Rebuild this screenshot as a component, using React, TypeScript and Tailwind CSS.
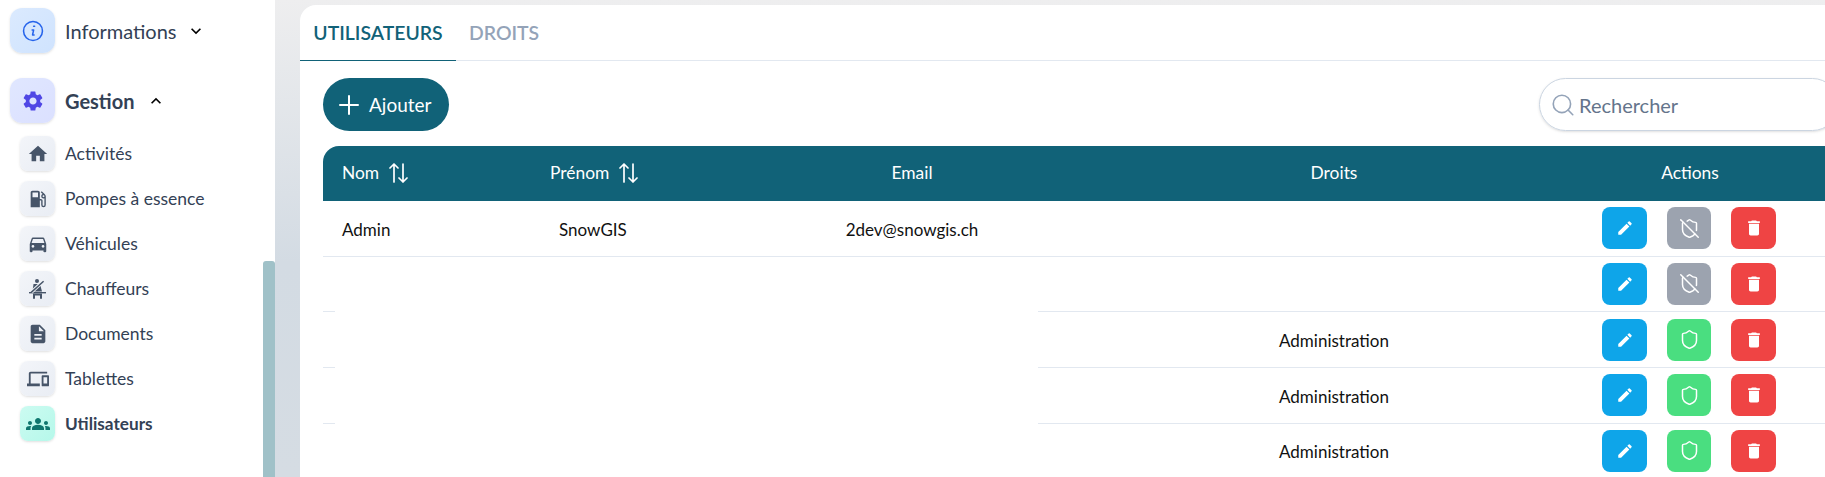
import React from "react";
import { MdHome, MdLocalGasStation, MdDirectionsCar, MdDescription, MdPhonelink, MdGroups, MdEdit, MdDelete, MdKeyboardArrowDown, MdKeyboardArrowUp, MdSettings } from "react-icons/md";
import { Shield, ShieldOff, Search } from "lucide-react";

const font = { fontFamily: "Lato, sans-serif" };

function Seatbelt() {
  return (
    <svg viewBox="0 0 17 20" className="w-[17px] h-[20px]" fill="#475569">
      <circle cx="8" cy="2" r="2" />
      <path d="M4.5 5h6.5l2 7.5H3.5z" />
      <path d="M0 13h17v1.4H0z" />
      <path d="M4 14.4h2v5.4H4zM11 14.4h2v5.4h-2zM4 14.4h9v2H4z" />
      <path d="M2.6 13L14 2.6" stroke="#f1f4f8" strokeWidth="3.4" fill="none" />
      <path d="M2.2 13.4L14.6 2.2" stroke="#475569" strokeWidth="1.5" fill="none" />
    </svg>
  );
}

const subItems = [
  { label: "Activités", icon: <MdHome size={22} color="#475569" /> },
  { label: "Pompes à essence", icon: <MdLocalGasStation size={22} color="#475569" /> },
  { label: "Véhicules", icon: <MdDirectionsCar size={22} color="#475569" /> },
  { label: "Chauffeurs", icon: <Seatbelt /> },
  { label: "Documents", icon: <MdDescription size={22} color="#475569" /> },
  { label: "Tablettes", icon: <MdPhonelink size={22} color="#475569" /> },
];

function Sidebar() {
  return (
    <aside className="relative w-[275px] h-full shrink-0 bg-white pt-2 pl-[10px] text-[#334155]">
      <div className="flex items-center h-[45px]">
        <div className="w-[45px] h-[45px] rounded-xl bg-gradient-to-br from-[#dbeafe] to-[#cfe3fe] shadow-sm flex items-center justify-center">
          <svg viewBox="0 0 20 20" className="w-[22px] h-[22px]" fill="none" stroke="#2563eb" strokeWidth="1.4">
            <circle cx="10" cy="10" r="8.6" />
            <path d="M10.6 5.6h.9M9.2 9h1.4l-1 4.6H11" strokeLinecap="round" strokeLinejoin="round" />
          </svg>
        </div>
        <span className="ml-[10px] text-[20px]">Informations</span>
        <MdKeyboardArrowDown size={20} color="#000" className="ml-[9px]" />
      </div>
      <div className="flex items-center h-[45px] mt-[25px]">
        <div className="w-[45px] h-[45px] rounded-xl bg-gradient-to-br from-[#e0e7ff] to-[#dbe0ff] shadow-sm flex items-center justify-center">
          <MdSettings size={24} color="#4f46e5" />
        </div>
        <span className="ml-[10px] text-[20px] font-bold">Gestion</span>
        <MdKeyboardArrowUp size={20} color="#000" className="ml-[11px]" />
      </div>
      <div className="mt-[13px] pl-[10px] flex flex-col gap-[10px]">
        {subItems.map((s) => (
          <div key={s.label} className="flex items-center h-[35px]">
            <div className="w-[35px] h-[35px] rounded-lg bg-gradient-to-br from-[#f3f5f9] to-[#e9edf4] shadow-sm flex items-center justify-center">
              {s.icon}
            </div>
            <span className="ml-[10px] pt-[2px] text-[17.5px]">{s.label}</span>
          </div>
        ))}
        <div className="flex items-center h-[35px]">
          <div className="w-[35px] h-[35px] rounded-lg bg-gradient-to-br from-[#ccfbf1] to-[#b5f8ea] shadow-sm flex items-center justify-center">
            <MdGroups size={24} color="#0f766e" />
          </div>
          <span className="ml-[10px] text-[17.2px] font-bold">Utilisateurs</span>
        </div>
      </div>
      <div className="absolute right-0 top-[261px] bottom-0 w-[12px] bg-[#a0c1c8] rounded-t-[3px]" />
    </aside>
  );
}

function Sort() {
  return (
    <svg viewBox="0 0 19 20" className="w-[19px] h-[20px] ml-[10px]" fill="none" stroke="#fff" strokeWidth="1.7" strokeLinecap="round" strokeLinejoin="round">
      <path d="M5 19V1M1 5l4-4 4 4" />
      <path d="M14 1v18M10 15l4 4 4-4" />
    </svg>
  );
}

const iconBtn = "h-[42px] rounded-lg flex items-center justify-center";

function Actions({ on }: { on: boolean }) {
  return (
    <div className="flex items-center">
      <div className={`${iconBtn} w-[45px] bg-[#0ea5e9] ml-[58px]`}><MdEdit size={18} color="#fff" /></div>
      <div className={`${iconBtn} w-[44px] ml-[20px] ${on ? "bg-[#4ade80]" : "bg-[#9ca3af]"}`}>
        {on ? <Shield size={21} color="#fff" strokeWidth={1.7} /> : <ShieldOff size={21} color="#fff" strokeWidth={1.7} />}
      </div>
      <div className={`${iconBtn} w-[45px] ml-[20px] bg-[#ef4444]`}><MdDelete size={20} color="#fff" /></div>
    </div>
  );
}

const grid = "grid grid-cols-[207px_170px_424px_420px_292px] items-center";

function Row({ nom, prenom, email, droits, on, masked }: { nom?: string; prenom?: string; email?: string; droits?: string; on: boolean; masked?: boolean }) {
  return (
    <div className={`${grid} relative h-[55.67px] border-b-[1px] border-[#e2e8f0] text-[17px] text-[#111]`}>
      <div className="pl-[19px] pt-[2px]">{nom}</div>
      <div className="pl-[29px] pt-[2px]">{prenom}</div>
      <div className="text-center pt-[2px]">{email}</div>
      <div className="text-center pt-[2px]">{droits}</div>
      <Actions on={on} />
      {masked && <div className="absolute left-[12px] top-[-1px] bottom-[-1px] w-[703px] bg-white" />}
    </div>
  );
}

export default function App() {
  return (
    <div style={font} className="w-[1825px] h-[477px] overflow-hidden flex bg-[linear-gradient(180deg,#eeeeef_0%,#d3dbe3_55%,#d5dce3_100%)]">
      <Sidebar />
      <main className="ml-[25px] mt-[5px] w-[1540px] shrink-0 h-[600px] bg-white rounded-tl-2xl">
        <div className="flex h-[56px] border-b-[1px] border-[#e2e8f0] text-[19.4px] font-semibold">
          <div className="w-[156px] h-[56px] -mb-px border-b-[1px] border-[#116278] text-[#116278] flex items-center justify-center">UTILISATEURS</div>
          <div className="ml-[13px] flex items-center text-[#94a3b8]">DROITS</div>
        </div>
        <div className="flex items-center justify-between mt-[17px] pl-[23px] pr-[1px]">
          <button className="h-[53px] w-[126px] rounded-full bg-[#116278] text-white text-[19px] flex items-center pl-[16px]">
            <svg viewBox="0 0 20 20" className="w-[20px] h-[20px] mr-[10px]" stroke="#fff" strokeWidth="2" strokeLinecap="round">
              <path d="M10 1v18M1 10h18" />
            </svg>
            <span className="pt-[2px]">Ajouter</span>
          </button>
          <div className="h-[53px] w-[300px] rounded-full border border-[#cbd5e1] shadow-sm flex items-center pl-[10px] text-[20px] text-[#64748b]">
            <Search size={26} color="#94a3b8" strokeWidth={1.5} className="mr-[3px]" />Rechercher
          </div>
        </div>
        <div className="mt-[15px] ml-[23px] w-[1513px]">
          <div className={`${grid} h-[55px] bg-[#116278] text-white rounded-tl-2xl text-[17.4px]`}>
            <div className="pl-[19px] flex items-center">Nom<Sort /></div>
            <div className="pl-[20px] flex items-center">Prénom<Sort /></div>
            <div className="text-center">Email</div>
            <div className="text-center">Droits</div>
            <div className="text-center">Actions</div>
          </div>
          <Row nom="Admin" prenom="SnowGIS" email="2dev@snowgis.ch" on={false} />
          <Row on={false} />
          <Row droits="Administration" on masked />
          <Row droits="Administration" on masked />
          <Row droits="Administration" on masked />
        </div>
      </main>
    </div>
  );
}
